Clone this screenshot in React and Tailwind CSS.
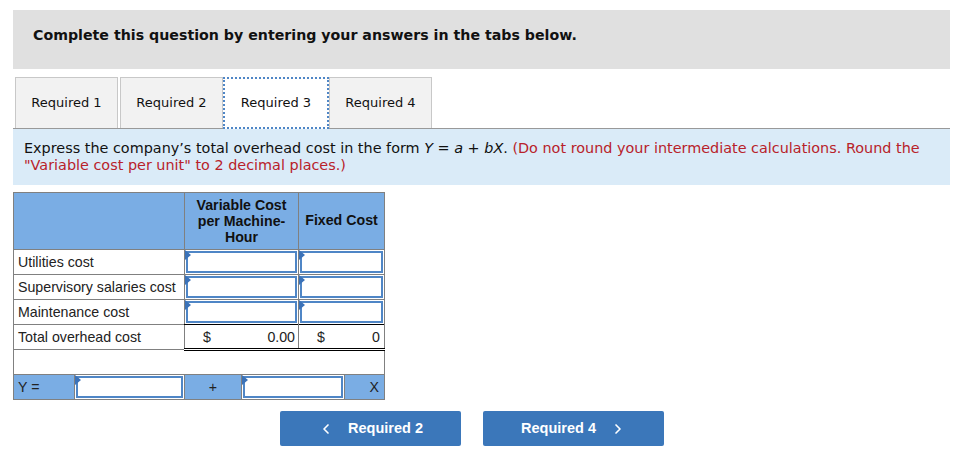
import { ChevronLeft, ChevronRight } from "lucide-react";

function Cue() {
  return (
    <span className="absolute left-0 top-0 w-0 h-0 border-t-[5px] border-b-[5px] border-l-[6px] border-t-transparent border-b-transparent border-l-[#3b72b8]" />
  );
}

function InputCell() {
  return (
    <td className="border border-[#808080] p-0 bg-white">
      <div className="relative h-[24px] p-px">
        <div className="h-full border-2 border-[#4f86c6] bg-white" />
        <Cue />
      </div>
    </td>
  );
}

const rows = ["Utilities cost", "Supervisory salaries cost", "Maintenance cost"];

export default function App() {
  return (
    <div className="w-[959px] h-[462px] bg-white pt-[10px] text-black font-[family-name:'DejaVu_Sans']">
      <div className="mx-[13px] w-[937px] h-[59px] bg-[#e0e0e0] px-5 pt-[16px]">
        <p className="font-bold text-[14.2px] leading-[18px] text-[#111]">
          Complete this question by entering your answers in the tabs below.
        </p>
      </div>

      <div className="mt-[8px] mx-[13px] w-[937px] flex items-end border-b border-[#999] pl-[2px]">
        {["Required 1", "Required 2", "Required 3", "Required 4"].map((t, i) =>
          i === 2 ? (
            <div
              key={t}
              className="w-[106px] h-[52px] bg-white border-2 border-dotted border-[#4f86c6] -mb-px flex items-center justify-center text-[13px] text-[#111]"
            >
              {t}
            </div>
          ) : (
            <div
              key={t}
              className={`w-[103px] h-[51px] bg-[#f2f2f2] border border-b-0 border-[#c8c8c8] flex items-center justify-center text-[13px] text-[#111] ${i === 1 ? "ml-[2px]" : ""}`}
            >
              {t}
            </div>
          )
        )}
      </div>

      <div className="mx-[13px] w-[937px] h-[56px] bg-[#daebf8] px-[11px] pt-[11px] text-[14.4px] leading-[17px] text-[#111]">
        Express the company’s total overhead cost in the form <i>Y</i> = <i>a</i> + <i>bX</i>.{" "}
        <span className="text-[#b8222a]">
          (Do not round your intermediate calculations. Round the "Variable cost per unit" to 2 decimal places.)
        </span>
      </div>

      <div className="mt-[7px] ml-[13px] w-[372px] font-[family-name:'Liberation_Sans'] text-[14.2px] text-[#222]">
        <table className="border-collapse w-[372px] table-fixed">
          <colgroup>
            <col className="w-[171px]" />
            <col className="w-[114px]" />
            <col className="w-[86px]" />
          </colgroup>
          <thead>
            <tr className="bg-[#7aade4] h-[57px]">
              <th className="border border-[#808080]" />
              <th className="border border-[#808080] font-bold leading-[16px] text-[#111] px-1">
                Variable Cost per Machine-Hour
              </th>
              <th className="border border-[#808080] font-bold text-[#111] px-0">Fixed Cost</th>
            </tr>
          </thead>
          <tbody>
            {rows.map((r) => (
              <tr key={r} className="h-[24px]">
                <td className="border border-[#808080] px-[4px] py-0 leading-[16px] whitespace-nowrap">{r}</td>
                <InputCell />
                <InputCell />
              </tr>
            ))}
            <tr className="h-[25px]">
              <td className="border border-[#808080] px-[4px] py-0 leading-[16px]">Total overhead cost</td>
              <td className="border-t border-t-black border-b-[3px] border-b-black border-double border-l border-l-[#808080] border-r border-r-[#808080] py-0 px-[3px] leading-[16px]">
                <div className="flex justify-between pl-[15px]">
                  <span>$</span>
                  <span>0.00</span>
                </div>
              </td>
              <td className="border-t border-t-black border-b-[3px] border-b-black border-double border-r border-r-[#808080] py-0 px-[4px] leading-[16px]">
                <div className="flex justify-between pl-[14px]">
                  <span>$</span>
                  <span>0</span>
                </div>
              </td>
            </tr>
            <tr className="h-[25px]">
              <td colSpan={3} className="border border-[#808080] p-0" />
            </tr>
            <tr>
              <td colSpan={3} className="border border-[#808080] p-0">
                <div className="flex h-[24px] leading-[16px]">
                  <div className="w-[61px] bg-[#7aade4] border-r border-[#808080] px-[4px] flex items-center">Y =</div>
                  <div className="relative w-[110px] p-px border-r border-[#808080]">
                    <div className="h-full border-2 border-[#4f86c6] bg-white" />
                    <Cue />
                  </div>
                  <div className="w-[57px] bg-[#7aade4] border-r border-[#808080] flex items-center justify-center">+</div>
                  <div className="relative w-[103px] p-px border-r border-[#808080]">
                    <div className="h-full border-2 border-[#4f86c6] bg-white" />
                    <Cue />
                  </div>
                  <div className="flex-1 bg-[#7aade4] flex items-center justify-end pr-[5px]">X</div>
                </div>
              </td>
            </tr>
          </tbody>
        </table>
      </div>

      <div className="mt-[11px] flex gap-[22px] ml-[280px] font-[family-name:'Liberation_Sans']">
        <button className="w-[181px] h-[35px] bg-[#3b77ba] rounded-[2px] text-white font-bold text-[14.5px] flex items-center justify-center gap-[14px]">
          <ChevronLeft size={16} strokeWidth={2.5} />
          <span>Required 2</span>
        </button>
        <button className="w-[181px] h-[35px] bg-[#3b77ba] rounded-[2px] text-white font-bold text-[14.5px] flex items-center justify-center gap-[14px]">
          <span>Required 4</span>
          <ChevronRight size={16} strokeWidth={2.5} />
        </button>
      </div>
    </div>
  );
}
